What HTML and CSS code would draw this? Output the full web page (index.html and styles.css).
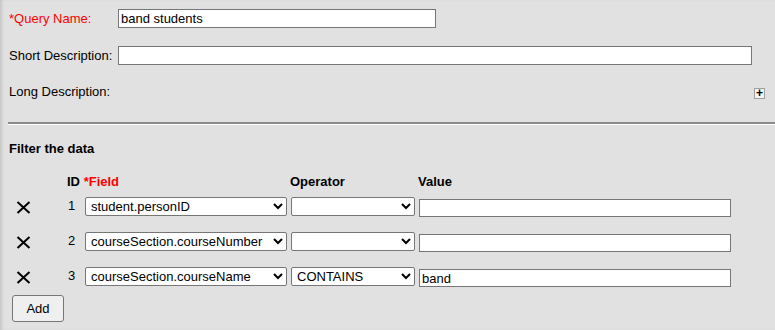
FILE: index.html
```html
<!DOCTYPE html>
<html lang="en">
<head>
  <meta charset="UTF-8">
  <title>Query Wizard</title>
  <link rel="stylesheet" href="styles.css">
</head>
<body>
    <div class="page">
        <div class="form-row first">
            <label class="req">*Query Name:</label>
            <input type="text" class="txt-name" value="band students">
        </div>
        <div class="form-row">
            <label>Short Description:</label>
            <input type="text" class="txt-short">
        </div>
        <div class="form-row long">
            <label>Long Description:</label>
            <span class="expand">+</span>
        </div>
        <hr class="divider">

        <h4>Filter the data</h4>
        <div class="filter-head">
            <span></span>
            <span class="head-id">ID <span class="req">*Field</span></span>
            <span class="head-op">Operator</span>
            <span class="head-val">Value</span>
        </div>
        <div class="filter">
            <span class="c-del"><svg class="del" viewBox="0 0 16 14"><path d="M2 1 L14 12 M14 1 L2 12"/></svg></span>
            <span class="c-id">1</span>
            <select class="c-field"><option>student.personID</option></select>
            <select class="c-op"><option></option></select>
            <input type="text" class="c-val">

            <span class="c-del"><svg class="del" viewBox="0 0 16 14"><path d="M2 1 L14 12 M14 1 L2 12"/></svg></span>
            <span class="c-id">2</span>
            <select class="c-field"><option>courseSection.courseNumber</option></select>
            <select class="c-op"><option></option></select>
            <input type="text" class="c-val">

            <span class="c-del"><svg class="del" viewBox="0 0 16 14"><path d="M2 1 L14 12 M14 1 L2 12"/></svg></span>
            <span class="c-id">3</span>
            <select class="c-field"><option>courseSection.courseName</option></select>
            <select class="c-op"><option>CONTAINS</option></select>
            <input type="text" class="c-val" value="band">
        </div>
        <button class="btn-add">Add</button>
    </div>
</body>
</html>
```

FILE: styles.css
```css
* {
    box-sizing: border-box;
}
body {
    margin: 0;
    background-color: #e1e1e1;
    font-family: "Liberation Sans", Arial, sans-serif;
    font-size: 13px;
    color: #000;
    height: 330px;
    overflow: hidden;
    box-shadow: inset 3px 0 3px -1px rgba(0, 0, 0, 0.12);
}
.page {
    padding: 0 0 0 9px;
}
.req {
    color: #ff0000;
}
input, select, button {
    font-family: "Liberation Sans", Arial, sans-serif;
    font-size: 13px;
    color: #000;
}
input[type="text"] {
    height: 19px;
    border: 1px solid #767676;
    background: #fff;
    padding: 0 2px;
    margin: 0;
}
.form-row {
    display: flex;
    align-items: center;
    height: 19px;
}
.form-row label {
    width: 109px;
    flex: none;
}
.form-row.first {
    margin-top: 9px;
}
.form-row + .form-row {
    margin-top: 18px;
}
.form-row.long {
    margin-top: 17px;
    justify-content: space-between;
    padding-right: 10px;
}
.txt-name {
    width: 318px;
}
.txt-short {
    width: 634px;
}
.expand {
    width: 11px;
    height: 11px;
    border: 1px solid #a0a0a0;
    background: #f4f4f4;
    font-size: 12px;
    font-weight: bold;
    line-height: 8px;
    text-align: center;
    margin-top: 4px;
}
.divider {
    margin: 21px 0 0 -1px;
    border: none;
    border-top: 2px solid #8a8a8a;
    border-bottom: 1px solid #fff;
    height: 0;
}
h4 {
    margin: 16px 0 0 0;
    font-size: 13px;
    font-weight: bold;
}
.filter-head, .filter {
    display: grid;
    grid-template-columns: 58px 18px 206px 128px 312px;
}
.filter-head {
    margin-top: 18px;
    height: 17px;
    font-weight: bold;
}
.head-id {
    grid-column: 2 / 4;
}
.head-op {
    margin-left: -1px;
}
.head-val {
    margin-left: -1px;
}
.filter {
    margin-top: 6px;
    grid-auto-rows: 19px;
    row-gap: 16px;
}
.c-del {
    padding-left: 6px;
}
.c-id {
    padding-left: 1px;
    margin-top: 1px;
}
select {
    height: 19px;
    border: 1px solid #767676;
    border-radius: 2px;
    background: #fff;
    padding: 0 0 0 1px;
    margin: 0;
}
select.c-field {
    width: 202px;
}
select.c-op {
    width: 124px;
}
input.c-val {
    width: 312px;
    height: 18px;
    margin-top: 2px;
}
.del {
    width: 17px;
    height: 14px;
    margin-top: 4px;
}
.del path {
    stroke: #000;
    stroke-width: 2;
    fill: none;
}
.btn-add {
    margin: 9px 0 0 3px;
    width: 52px;
    height: 27px;
    background: #efefef;
    border: 1px solid #767676;
    border-radius: 3px;
    padding: 0;
}
```
